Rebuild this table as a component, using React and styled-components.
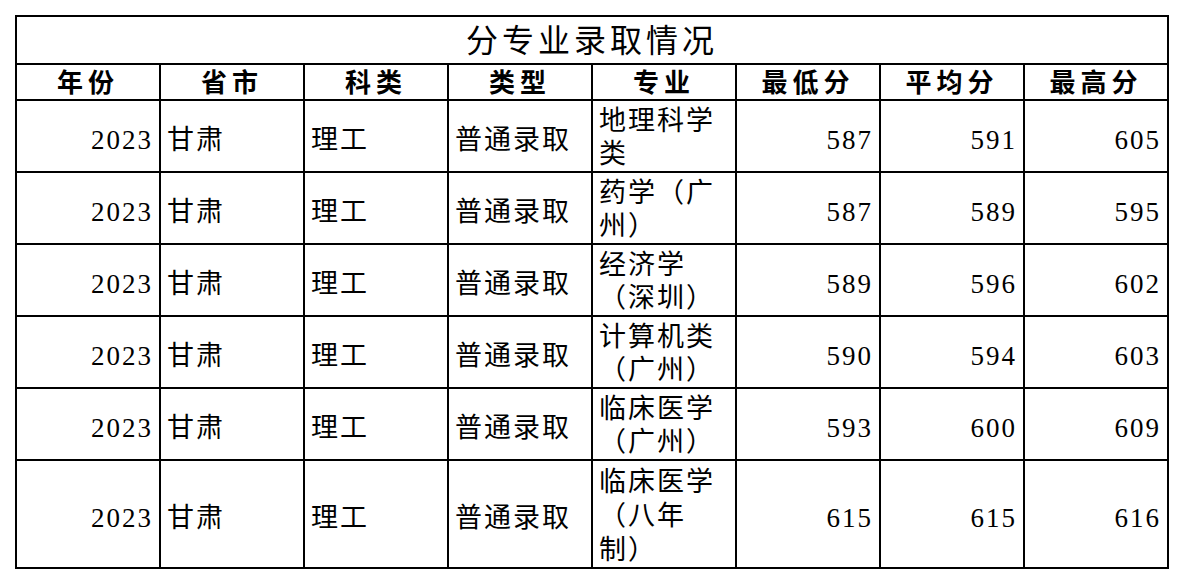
import styled, { createGlobalStyle } from 'styled-components';

const GlobalStyle = createGlobalStyle`
  html, body {
    margin: 0;
    padding: 0;
    background: #fff;
  }
`;

const Page = styled.div`
  padding: 15px;
`;

const Table = styled.table`
  border-collapse: collapse;
  table-layout: fixed;
  width: 1154px;
  color: #000;
  font-family: "Liberation Serif", "Noto Sans CJK SC", serif;
`;

const Row = styled.tr`
  &:last-child td[data-wrap] {
    line-height: 34px;
  }
`;

const Cell = styled.td`
  border: 2px solid #000;
  padding: ${(props) => (props['data-wrap'] ? '4px 6px 0' : '8px 6px 0')};
  font-size: 27px;
  letter-spacing: 2px;
  line-height: 33px;
  vertical-align: middle;
  text-align: ${(props) => (props.$num ? 'right' : 'left')};
`;

const TitleCell = styled.th`
  border: 2px solid #000;
  height: 44px;
  padding: 2px 0 0;
  font-size: 32px;
  font-weight: 400;
  letter-spacing: 4px;
  line-height: 44px;
  text-align: center;
`;

const HeadCell = styled.th`
  border: 2px solid #000;
  height: 30px;
  padding: 4px 0 0;
  font-size: 26px;
  font-weight: 700;
  letter-spacing: 5px;
  line-height: 30px;
  text-align: center;
`;

const headers = ['年份', '省市', '科类', '类型', '专业', '最低分', '平均分', '最高分'];

const rows = [
  ['地理科学类', 587, 591, 605],
  ['药学（广州）', 587, 589, 595],
  ['经济学（深圳）', 589, 596, 602],
  ['计算机类（广州）', 590, 594, 603],
  ['临床医学（广州）', 593, 600, 609],
  ['临床医学（八年制）', 615, 615, 616]
];

export default function App() {
  return (
    <Page>
      <GlobalStyle />
      <Table>
        <colgroup>
          {headers.map((h) => (
            <col key={h} style={{ width: 144 }} />
          ))}
        </colgroup>
        <thead>
          <tr>
            <TitleCell colSpan={8}>分专业录取情况</TitleCell>
          </tr>
          <tr>
            {headers.map((h) => (
              <HeadCell key={h}>{h}</HeadCell>
            ))}
          </tr>
        </thead>
        <tbody>
          {rows.map(([major, min, avg, max]) => (
            <Row key={major}>
              <Cell $num>2023</Cell>
              <Cell>甘肃</Cell>
              <Cell>理工</Cell>
              <Cell>普通录取</Cell>
              <Cell data-wrap="true">{major}</Cell>
              <Cell $num>{min}</Cell>
              <Cell $num>{avg}</Cell>
              <Cell $num>{max}</Cell>
            </Row>
          ))}
        </tbody>
      </Table>
    </Page>
  );
}
